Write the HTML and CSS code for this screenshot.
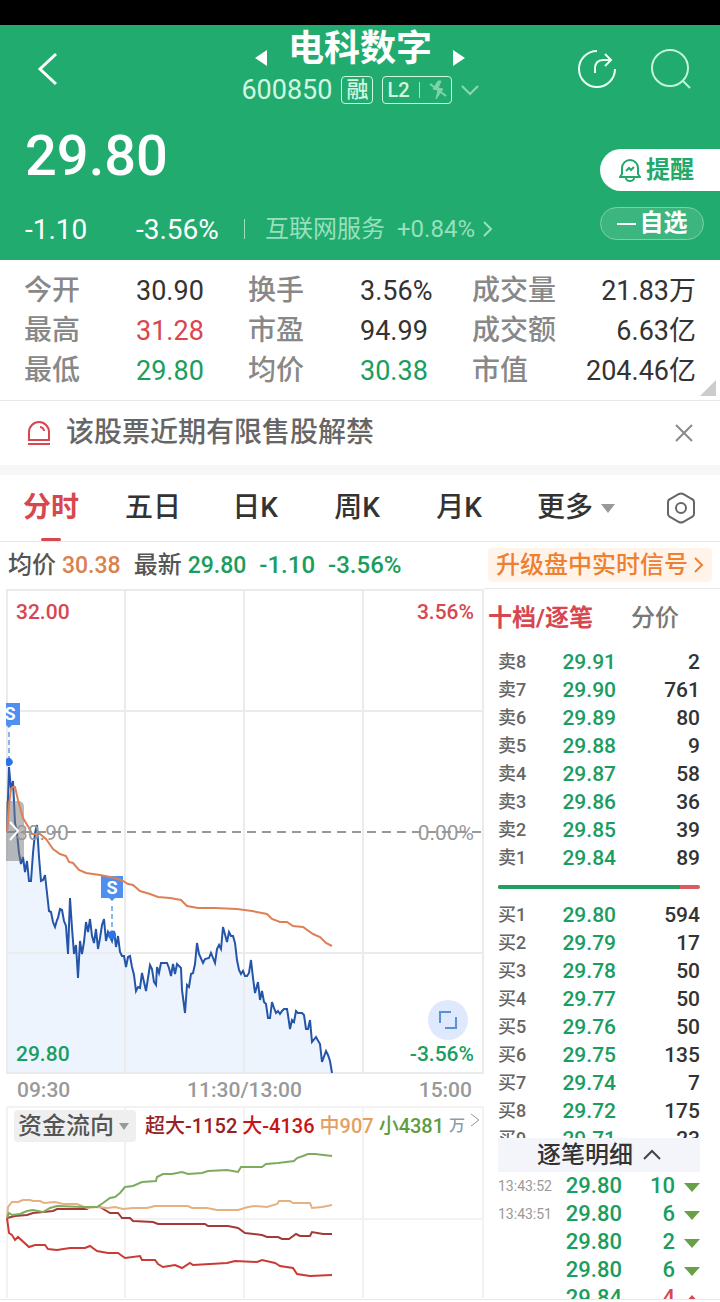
FILE: index.html
```html
<!DOCTYPE html>
<html lang="zh-CN">
<head>
  <meta charset="UTF-8" />
  <meta name="viewport" content="width=device-width, initial-scale=1.0"/>
  <link rel="stylesheet" href="styles.css">
  <title>电科数字 600850</title>
</head>
<body>
  <div class="status-bar"></div>

  <header class="header">
    <div class="topbar">
      <button class="icon-btn back" aria-label="返回">
        <svg width="24" height="36" viewBox="0 0 24 36" fill="none" stroke="#fff" stroke-width="3"><path d="M20 3 4 18l16 15"/></svg>
      </button>
      <div class="stock">
        <div class="stock-name">
          <button class="icon-btn" aria-label="上一只">
            <svg width="14" height="18" viewBox="0 0 14 18"><path d="M13 1v16L1 9z" fill="#fff"/></svg>
          </button>
          <h1>电科数字</h1>
          <button class="icon-btn" aria-label="下一只">
            <svg width="14" height="18" viewBox="0 0 14 18"><path d="M1 1v16l12-8z" fill="#fff"/></svg>
          </button>
        </div>
        <div class="stock-code">
          <span class="code">600850</span>
          <span class="tag">融</span>
          <span class="tag level">L2 <i></i>
            <svg width="18" height="20" viewBox="0 0 18 20" fill="#7fd3a9" stroke="#7fd3a9"><path d="M9 1 4 9l5 1-2 9 7-10-5-1 3-7z"/><path d="m1 4 16 12" stroke-width="2"/></svg>
          </span>
          <svg width="18" height="12" viewBox="0 0 18 12" fill="none" stroke="#8bd9b3" stroke-width="2"><path d="m1 2 8 8 8-8"/></svg>
        </div>
      </div>
      <div class="actions">
        <button class="icon-btn" aria-label="分享">
          <svg width="42" height="42" viewBox="0 0 42 42" fill="none" stroke="#e9fff4" stroke-width="2"><path d="M21 3a18 18 0 1 0 18 18"/><path d="M19 25v-4c0-6 3-9 8-9h8M29 6l6 6-6 6"/></svg>
        </button>
        <button class="icon-btn" aria-label="搜索">
          <svg width="42" height="42" viewBox="0 0 42 42" fill="none" stroke="#c4f5dc" stroke-width="2"><circle cx="19" cy="20" r="18"/><path d="m32 33 7 7"/></svg>
        </button>
      </div>
    </div>

    <div class="summary">
      <div class="quote">
        <div class="price">29.80</div>
        <div class="change">
          <span>-1.10</span>
          <span>-3.56%</span>
          <a class="sector" href="#">互联网服务 <b>+0.84%</b>
            <svg width="10" height="18" viewBox="0 0 10 18" fill="none" stroke="currentColor" stroke-width="2"><path d="m1 2 7 7-7 7"/></svg>
          </a>
        </div>
      </div>
      <div class="side">
        <button class="alert-btn">
          <svg width="22" height="24" viewBox="0 0 22 24" fill="none" stroke="#22a86c" stroke-width="2"><path d="M1 19h20l-2-3v-6a8 8 0 0 0-16 0v6z"/><path d="M7 20a4 3 0 0 0 8 0M7 13l3-3 2 2 3-3"/></svg>
          提醒
        </button>
        <button class="fav-btn"><i></i>自选</button>
      </div>
    </div>
  </header>

  <dl class="stats">
    <dt>今开</dt><dd>30.90</dd>
    <dt>换手</dt><dd>3.56%</dd>
    <dt>成交量</dt><dd>21.83万</dd>
    <dt>最高</dt><dd class="up">31.28</dd>
    <dt>市盈</dt><dd>94.99</dd>
    <dt>成交额</dt><dd>6.63亿</dd>
    <dt>最低</dt><dd class="down">29.80</dd>
    <dt>均价</dt><dd class="down">30.38</dd>
    <dt>市值</dt><dd>204.46亿</dd>
  </dl>

  <div class="notice">
    <svg width="26" height="28" viewBox="0 0 26 28" fill="none" stroke="#d8464f" stroke-width="2"><path d="M3 21V13a10 10 0 0 1 20 0v8z"/><path d="M2 25h22M14 8c2 0 4 2 4 4"/></svg>
    <span>该股票近期有限售股解禁</span>
    <button class="icon-btn" aria-label="关闭">
      <svg width="20" height="20" viewBox="0 0 20 20" stroke="#8a8a8a" stroke-width="2"><path d="m2 2 16 16M18 2 2 18"/></svg>
    </button>
  </div>

  <nav class="tabs">
    <button class="active">分时</button>
    <button>五日</button>
    <button>日K</button>
    <button>周K</button>
    <button>月K</button>
    <button class="more">更多<i class="caret"></i></button>
    <button class="setting" aria-label="设置">
      <svg width="30" height="32" viewBox="0 0 30 32" fill="none" stroke="#666" stroke-width="2"><path d="M13 2q2-1 4 0l9 5q2 1 2 3v12q0 2-2 3l-9 5q-2 1-4 0l-9-5q-2-1-2-3V10q0-2 2-3z"/><circle cx="15" cy="16" r="5"/></svg>
    </button>
  </nav>

  <div class="info">
    <span>均价 <b class="avg">30.38</b></span>
    <span>最新 <b class="down">29.80</b></span>
    <span class="down">-1.10</span>
    <span class="down">-3.56%</span>
    <a class="upgrade" href="#">升级盘中实时信号
      <svg width="10" height="16" viewBox="0 0 10 16" fill="none" stroke="currentColor" stroke-width="2"><path d="m1 1 7 7-7 7"/></svg>
    </a>
  </div>

  <main class="board">
    <section class="charts">
      <div class="chart">
        <svg viewBox="0 0 484 486">
          <path class="area" d="M7 244 9 179 11 202 13 193 15 235 17 245 19 265 21 276 23 269 25 284 27 273 29 293 31 293 33 265 35 245 37 237 39 269 41 293 45 287 47 305 49 323 51 324 55 339 57 332 60 321 62 322 64 333 66 338 68 366 70 310 74 366 76 357 78 390 80 353 82 366 86 334 88 344 90 331 94 355 96 341 98 361 104 331 106 353 108 344 112 353 114 343 116 359 118 348 122 368 124 368 126 379 130 368 134 387 136 403 140 400 142 385 146 403 150 377 154 394 156 397 157 379 161 375 167 375 171 388 173 376 175 386 177 376 181 380 185 425 187 397 191 386 195 376 197 355 203 375 209 370 215 375 217 361 221 361 223 339 227 354 229 344 233 348 237 372 241 386 245 388 249 385 251 372 255 405 258 394 264 414 268 430 270 430 272 414 280 426 287 421 290 441 296 423 304 427 308 441 310 432 312 454 316 449 320 456 322 474 326 463 330 473 332 485H7z"/>
          <path class="grid" d="M7 2H483V485H7zM125 2V485M244 2V485M363 2V485M7 123H483M7 365H483"/>
          <path class="middle" d="M7 244H483"/>
          <polyline class="line price-line" points="7,244 9,179 11,202 13,193 15,235 17,245 19,265 21,276 23,269 25,284 27,273 29,293 31,293 33,265 35,245 37,237 39,269 41,293 43,292 45,287 47,305 49,323 51,324 53,334 55,339 57,332 58,330 60,321 62,322 64,333 66,338 68,366 70,310 72,340 74,366 76,357 78,390 80,353 82,366 84,354 86,334 88,344 90,331 92,348 94,355 96,341 98,361 100,350 102,337 104,331 106,353 108,344 112,353 114,343 116,359 118,348 120,364 122,368 124,368 126,379 128,369 130,368 132,379 134,387 136,403 138,399 140,400 142,385 144,394 146,403 148,390 150,377 152,381 154,394 156,397 157,379 159,385 161,375 167,375 169,380 171,388 173,376 175,386 177,376 181,380 182,402 185,425 187,397 189,399 191,386 193,385 195,376 197,355 199,366 203,375 205,371 209,370 211,365 213,370 215,375 217,361 219,357 221,361 223,339 227,354 229,344 231,348 233,348 235,355 237,372 239,382 241,386 243,383 245,388 247,388 249,385 251,372 253,390 255,405 258,394 260,412 262,403 264,414 266,416 268,430 270,430 272,414 274,420 276,425 278,423 280,426 282,423 284,421 287,421 288,427 290,441 292,432 294,434 296,423 298,425 302,425 304,427 306,441 308,441 310,432 312,454 316,449 320,456 322,474 326,463 328,467 330,473 332,485"/>
          <!-- drawer handle -->
          <path class="handle" d="M6 213h12q6 0 6 6v48q0 6-6 6H6z"/>
          <!-- sell markers -->
          <g class="marker">
            <path d="M6 115h14v22h-8l-3 3-3-3z"/>
            <path class="stem" d="M9 144v26"/>
            <path class="dot" d="M6 171a4 4 0 1 1 0 6z"/>
            <path d="M101 288h22v22h-8l-3 3-3-3h-8z"/>
            <path class="stem" d="M112 318v26"/>
            <circle class="dot" cx="112" cy="347" r="4"/>
            <text x="10" y="132">S</text>
            <text x="112" y="306">S</text>
          </g>
          <polyline class="line avg-line" points="7,244 9,217 11,201 13,199 15,199 18,212 23,230 29,240 32,246 40,246 46,251 53,261 60,266 66,268 69,274 73,275 79,282 86,285 100,287 115,290 123,293 128,296 133,297 140,303 150,306 158,309 170,310 181,312 187,318 198,320 215,320 237,321 252,323 267,326 272,331 280,334 287,334 293,338 303,339 313,346 320,349 326,355 332,358"/>
        </svg>
        <span class="label top-left up">32.00</span>
        <span class="label top-right up">3.56%</span>
        <span class="label mid-left">30.90</span>
        <span class="label mid-right">0.00%</span>
        <span class="label bottom-left down">29.80</span>
        <span class="label bottom-right down">-3.56%</span>
        <button class="drawer" aria-label="展开">
          <svg width="12" height="20" viewBox="0 0 12 20" fill="none" stroke="#fff" stroke-width="2"><path d="m2 1 8 9-8 9"/></svg>
        </button>
        <button class="full" aria-label="全屏">
          <svg width="20" height="20" viewBox="0 0 20 20" fill="none" stroke="#5b8fd9" stroke-width="2"><path d="M2 13V2h11M18 7v11H7"/></svg>
        </button>
      </div>
      <div class="axis"><span>09:30</span><span>11:30/13:00</span><span>15:00</span></div>
      <div class="flow">
        <svg viewBox="0 0 484 193">
          <path class="grid light" d="M7 1H483V192M125 1V192M244 1V192M363 1V192M7 113H483M7 1V192"/>
          <polyline class="line" stroke="#a33a38" points="7,112 15,110 27,109 33,107 53,105 57,103 87,103 89,101 100,101 110,107 118,107 122,112 130,112 133,115 153,116 158,118 205,118 208,120 228,120 238,122 245,127 262,129 267,131 278,131 282,133 289,133 296,128 300,130 310,130 312,126 323,128 332,128"/>
          <polyline class="line" stroke="#c93b35" points="7,112 9,127 12,129 15,134 18,131 29,141 35,139 45,139 48,143 57,144 70,142 85,142 90,140 97,145 108,147 118,147 125,152 140,150 142,154 155,154 158,158 163,161 175,159 182,162 190,157 193,159 227,157 235,155 257,156 262,154 275,157 280,160 293,162 297,168 310,170 332,169"/>
          <polyline class="line" stroke="#e5b183" points="7,112 8,101 12,96 18,96 23,94 30,94 33,95 40,95 44,97 55,96 63,98 77,98 87,102 97,101 108,102 115,101 123,103 133,102 147,102 155,100 188,100 192,102 207,102 217,104 238,104 248,101 255,100 267,101 277,98 279,95 290,95 293,97 310,97 312,102 322,101 332,99"/>
          <polyline class="line" stroke="#7dab5f" points="7,112 9,107 12,109 20,108 27,105 33,104 43,106 50,102 57,100 83,101 97,101 103,97 110,92 115,91 120,87 125,81 133,80 142,76 156,75 157,71 163,68 172,68 182,66 188,68 202,67 208,65 227,64 238,66 241,61 262,61 266,58 278,57 294,55 297,52 303,50 308,48 315,48 332,50"/>
        </svg>
        <div class="flow-head">
          <button class="flow-select">资金流向<i class="caret"></i></button>
          <span class="huge">超大-1152</span>
          <span class="big">大-4136</span>
          <span class="mid">中907</span>
          <span class="small">小4381</span>
          <span class="unit">万</span>
          <svg width="10" height="14" viewBox="0 0 10 14" fill="none" stroke="#999" stroke-width="1"><path d="m1 1 8 6-8 6"/></svg>
        </div>
      </div>
    </section>

    <section class="book">
      <div class="book-tabs">
        <button class="active">十档/逐笔</button>
        <button>分价</button>
      </div>
      <table class="orders">
        <tr><th>卖8</th><td>29.91</td><td>2</td></tr>
        <tr><th>卖7</th><td>29.90</td><td>761</td></tr>
        <tr><th>卖6</th><td>29.89</td><td>80</td></tr>
        <tr><th>卖5</th><td>29.88</td><td>9</td></tr>
        <tr><th>卖4</th><td>29.87</td><td>58</td></tr>
        <tr><th>卖3</th><td>29.86</td><td>36</td></tr>
        <tr><th>卖2</th><td>29.85</td><td>39</td></tr>
        <tr><th>卖1</th><td>29.84</td><td>89</td></tr>
      </table>
      <div class="ratio"><div style="width: 90%"></div></div>
      <div class="buy-list">
        <table class="orders">
          <tr><th>买1</th><td>29.80</td><td>594</td></tr>
          <tr><th>买2</th><td>29.79</td><td>17</td></tr>
          <tr><th>买3</th><td>29.78</td><td>50</td></tr>
          <tr><th>买4</th><td>29.77</td><td>50</td></tr>
          <tr><th>买5</th><td>29.76</td><td>50</td></tr>
          <tr><th>买6</th><td>29.75</td><td>135</td></tr>
          <tr><th>买7</th><td>29.74</td><td>7</td></tr>
          <tr><th>买8</th><td>29.72</td><td>175</td></tr>
          <tr><th>买9</th><td>29.71</td><td>23</td></tr>
        </table>
      </div>
      <button class="detail-btn">逐笔明细
        <svg width="18" height="12" viewBox="0 0 18 12" fill="none" stroke="#444" stroke-width="2"><path d="m1 10 8-8 8 8"/></svg>
      </button>
      <div class="trade-list">
        <table class="trades">
          <tr><th>13:43:52</th><td>29.80</td><td>10</td><td><i class="tri"></i></td></tr>
          <tr><th>13:43:51</th><td>29.80</td><td>6</td><td><i class="tri"></i></td></tr>
          <tr><th></th><td>29.80</td><td>2</td><td><i class="tri"></i></td></tr>
          <tr><th></th><td>29.80</td><td>6</td><td><i class="tri"></i></td></tr>
          <tr><th></th><td>29.84</td><td class="up">4</td><td><i class="tri tri-up"></i></td></tr>
        </table>
      </div>
    </section>
  </main>
</body>
</html>
```
FILE: styles.css
```css
* {
  box-sizing: border-box;
}

body {
  margin: 0;
  font-family: Roboto, "Noto Sans CJK SC", sans-serif;
  font-size: 24px;
  font-weight: 500;
  line-height: 1.2;
  color: #333;
  background: #fff;
}

button {
  padding: 0;
  border: none;
  background: none;
  font: inherit;
  color: inherit;
  cursor: pointer;
}

a {
  color: inherit;
  text-decoration: none;
}

b, th, td, dd {
  font-weight: 400;
}

svg {
  display: block;
  flex: none;
}

.up {
  color: #d8464f;
}

.down {
  color: #1a9d60;
}

.status-bar {
  height: 25px;
  background: #000;
}

/* header */
.header {
  background: #22ab6e;
  color: #fff;
}

.topbar {
  display: grid;
  grid-template-columns: 1fr auto 1fr;
  align-items: center;
  height: 88px;
  padding: 0 27px;
}

.icon-btn {
  display: flex;
}

.back {
  padding-left: 9px;
}

.stock-name {
  display: flex;
  align-items: center;
  justify-content: center;
  gap: 20px;
}

.stock-name .icon-btn {
  padding-top: 18px;
}

h1 {
  margin: 0;
  font-size: 36px;
  font-weight: 700;
  line-height: 42px;
}

.stock-code {
  display: flex;
  align-items: center;
  justify-content: center;
  gap: 9px;
  height: 40px;
  color: #d0f7e2;
}

.code {
  font-size: 27px;
  font-weight: 400;
}

.tag {
  display: flex;
  align-items: center;
  height: 28px;
  padding: 0 4px;
  border: 1px solid #d0f7e2;
  border-radius: 4px;
  font-size: 22px;
}

.level {
  gap: 9px;
  font-size: 20px;
}

.level i {
  width: 1px;
  height: 16px;
  background: #a5e5c5;
}

.actions {
  display: flex;
  justify-content: flex-end;
  gap: 33px;
}

.summary {
  display: flex;
}

.quote {
  flex: 1;
  padding-left: 25px;
}

.price {
  font-size: 56px;
  line-height: 86px;
}

.change {
  display: flex;
  align-items: center;
  height: 61px;
  font-size: 28px;
  font-weight: 400;
}

.change span {
  min-width: 111px;
}

.sector {
  display: flex;
  align-items: center;
  gap: 12px;
  color: #98e0bd;
  font-size: 24px;
}

.sector::before {
  content: "";
  width: 1px;
  height: 20px;
  margin-right: 8px;
  margin-left: -3px;
  background: #98e0bd;
}

.sector svg {
  margin-left: -4px;
}

.side {
  display: flex;
  flex-direction: column;
  gap: 16px;
  width: 120px;
  padding-top: 36px;
}

.alert-btn {
  display: flex;
  align-items: center;
  gap: 5px;
  height: 42px;
  padding-left: 19px;
  border-radius: 21px 0 0 21px;
  background: #fff;
  color: #22a86c;
  font-weight: 700;
}

.fav-btn {
  display: flex;
  align-items: center;
  justify-content: center;
  gap: 4px;
  height: 33px;
  margin-right: 16px;
  border: 1px solid #7ed0a8;
  border-radius: 17px;
  background: #3cb57f;
  font-weight: 700;
}

.fav-btn i {
  width: 19px;
  height: 2px;
  background: #fff;
}

/* stats */
.stats {
  position: relative;
  display: grid;
  grid-template-columns: repeat(6, 1fr);
  margin: 0;
  padding: 11px 24px 9px;
  border-bottom: 1px solid #e8e8e8;
  font-size: 28px;
  line-height: 40px;
}

.stats::after {
  content: "";
  position: absolute;
  right: 4px;
  bottom: 4px;
  border: 8px solid #ccc;
  border-top-color: transparent;
  border-left-color: transparent;
}

.stats dt {
  color: #888;
}

.stats dd {
  margin: 0;
  font-size: 27px;
  white-space: nowrap;
}

.stats dd:nth-of-type(3n) {
  display: flex;
  justify-content: flex-end;
}

/* notice */
.notice {
  display: flex;
  align-items: center;
  gap: 14px;
  height: 74px;
  padding: 0 26px;
  border-bottom: 10px solid #f7f7f7;
  color: #666;
  font-size: 28px;
}

.notice .icon-btn {
  margin-left: auto;
}

/* tabs */
.tabs {
  display: flex;
  align-items: stretch;
  height: 67px;
  border-bottom: 1px solid #e8e8e8;
  font-size: 28px;
}

.tabs button {
  position: relative;
  display: flex;
  flex: 102;
  align-items: center;
  justify-content: center;
}

.tabs .more {
  flex: 132;
}

.tabs .setting {
  flex: 78;
}

.tabs .active {
  color: #d8464f;
  font-weight: 700;
}

.tabs .active::after {
  content: "";
  position: absolute;
  bottom: 0;
  left: 50%;
  width: 20px;
  height: 3px;
  margin-left: -10px;
  border-radius: 2px;
  background: #d8464f;
}

.caret {
  margin-left: 8px;
  border: 7px solid transparent;
  border-top: 9px solid #999;
  border-bottom: 0;
}

/* info row */
.info {
  display: flex;
  align-items: center;
  gap: 13px;
  height: 46px;
  padding: 0 8px;
  color: #555;
}

.info b {
  font-size: 23px;
  font-weight: 500;
}

.avg {
  color: #d9824f;
}

.upgrade {
  display: flex;
  align-items: center;
  gap: 6px;
  height: 34px;
  margin-left: auto;
  padding: 0 8px;
  border-radius: 4px;
  background: #fff3ea;
  color: #ee8030;
}

/* charts */
.board {
  display: grid;
  grid-template-columns: 484fr 236fr;
  border-bottom: 1px solid #e8e8e8;
}

.charts {
  min-width: 0;
}

.chart, .flow {
  position: relative;
}

.grid {
  fill: none;
  stroke: #ebebee;
  stroke-width: 2;
}

.light {
  stroke: #f2f2f2;
}

.area {
  fill: #eef4fd;
}

.middle {
  stroke: #999;
  stroke-width: 2;
  stroke-dasharray: 9 6;
}

.line {
  fill: none;
  stroke-width: 2;
}

.price-line {
  stroke: #2455a8;
}

.avg-line {
  stroke: #dd8055;
}

.handle {
  fill: #777;
  opacity: 0.5;
}

.marker {
  fill: #4f8ff0;
}

.marker text {
  fill: #fff;
  font-size: 18px;
  font-weight: 700;
  text-anchor: middle;
}

.stem {
  stroke: #8fb4ea;
  stroke-width: 2;
  stroke-dasharray: 5 3;
}

.dot {
  fill: #2b74e4;
}

.label {
  position: absolute;
  font-size: 21px;
  line-height: 26px;
}

.top-left, .top-right {
  top: 11px;
}

.mid-left, .mid-right {
  top: 50%;
  margin-top: -11px;
  color: #999;
  font-weight: 400;
}

.bottom-left, .bottom-right {
  bottom: 7px;
}

.top-left, .mid-left, .bottom-left {
  left: 16px;
}

.top-right, .mid-right, .bottom-right {
  right: 10px;
}

.drawer {
  position: absolute;
  top: 50%;
  left: 8px;
  margin-top: -10px;
}

.full {
  position: absolute;
  right: 16px;
  bottom: 34px;
  display: flex;
  align-items: center;
  justify-content: center;
  width: 40px;
  height: 40px;
  border-radius: 50%;
  background: #dfe9fd;
}

.axis {
  display: flex;
  justify-content: space-between;
  height: 32px;
  padding: 0 12px 0 17px;
  color: #999;
  font-size: 21px;
  line-height: 32px;
}

.flow-head {
  position: absolute;
  top: 4px;
  left: 14px;
  right: 5px;
  display: flex;
  align-items: center;
  gap: 5px;
  font-size: 20px;
  white-space: nowrap;
}

.flow-select {
  display: flex;
  align-items: center;
  height: 32px;
  margin-right: 4px;
  padding: 0 7px 0 4px;
  border-radius: 4px;
  background: #efefef;
  color: #555;
  font-size: 24px;
}

.flow-select .caret {
  margin-left: 5px;
  border-width: 7px 5px 0;
}

.huge {
  color: #982222;
}

.big {
  color: #c81414;
}

.mid {
  color: #e5a060;
}

.small {
  color: #5f9c3f;
}

.unit {
  color: #8c9bad;
  font-size: 16px;
}

.flow-head > svg {
  margin: 0 0 12px auto;
}

/* order book */
.book {
  min-width: 0;
  padding-right: 20px;
  border-top: 1px solid #e8e8e8;
}

.book-tabs {
  display: flex;
  gap: 38px;
  height: 59px;
  padding-left: 4px;
  color: #777;
  white-space: nowrap;
}

.book-tabs .active {
  color: #d8464f;
  font-weight: 700;
}

.orders, .trades, .ratio, .detail-btn {
  margin-left: 14px;
}

.orders, .trades {
  width: calc(100% - 14px);
  table-layout: fixed;
  border-collapse: collapse;
  font-size: 21px;
  line-height: 28px;
}

.orders th, .orders td, .trades th, .trades td {
  height: 28px;
  padding: 0;
  font-weight: 500;
  text-align: right;
}

.orders th {
  width: 56px;
  color: #666;
  font-size: 18px;
  text-align: left;
}

.orders td:nth-child(2) {
  width: 62px;
  color: #1a9d60;
}

.ratio {
  height: 4px;
  margin-top: 13px;
  margin-bottom: 12px;
  border-radius: 2px;
  background: #dd5a5f;
  overflow: hidden;
}

.ratio div {
  height: 4px;
  background: #1f9f63;
}

.buy-list {
  height: 237px;
  overflow: hidden;
}

.detail-btn {
  display: flex;
  align-items: center;
  justify-content: center;
  gap: 10px;
  width: calc(100% - 14px);
  height: 34px;
  background: #f4f5fa;
}

.trade-list {
  height: 127px;
  overflow: hidden;
}

.trades th {
  width: 56px;
  color: #999;
  font-size: 14px;
  font-weight: 400;
  text-align: left;
}

.trades td {
  color: #1a9d60;
  font-size: 22px;
}

.trades td:nth-child(2) {
  width: 68px;
}

.trades td:nth-child(4) {
  width: 25px;
}

.trades .up {
  color: #d8464f;
}

.tri {
  display: inline-block;
  vertical-align: middle;
  border: 8px solid transparent;
  border-top: 9px solid #67a046;
  border-bottom: 0;
}

.tri-up {
  border-top: 0;
  border-bottom: 9px solid #d8464f;
}
```
